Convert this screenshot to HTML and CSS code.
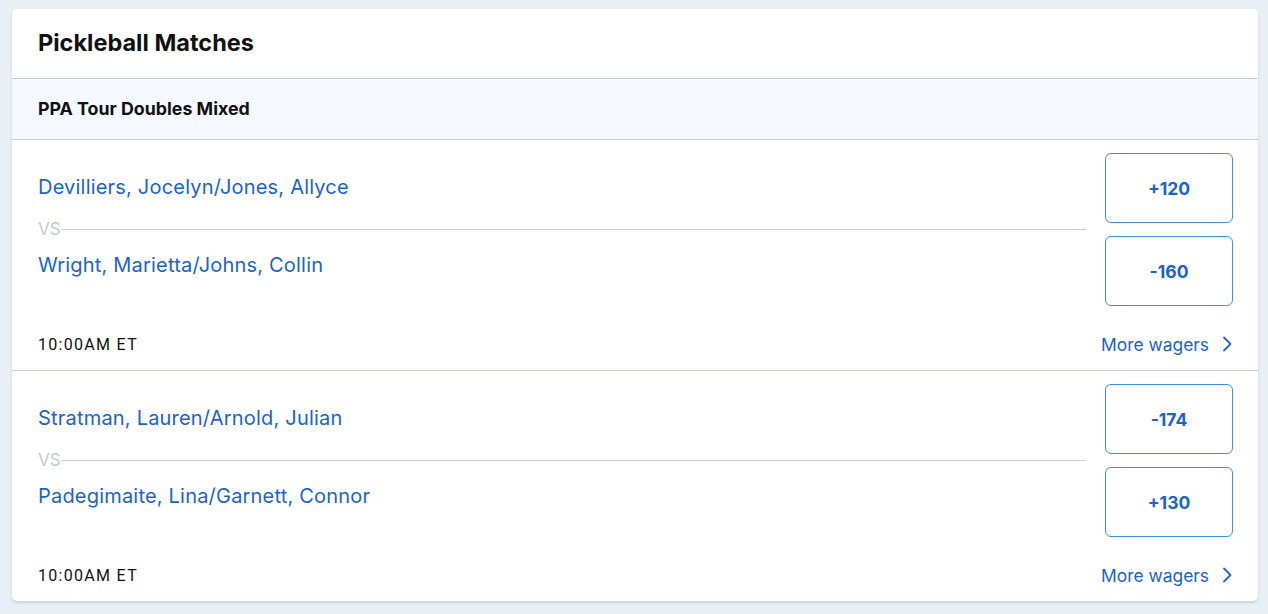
FILE: index.html
```html
<!DOCTYPE html>
<html>
<head>
<meta charset="utf-8">
<link rel="stylesheet" href="styles.css">
</head>
<body>
<div class="card">
  <div class="card-header"><h1 class="title">Pickleball Matches</h1></div>
  <div class="league">PPA Tour Doubles Mixed</div>
  <div class="match">
    <div class="match-main">
      <div class="teams">
        <div class="team">Devilliers, Jocelyn/Jones, Allyce</div>
        <div class="vs"><span class="vs-label">VS</span><span class="vs-line"></span></div>
        <div class="team">Wright, Marietta/Johns, Collin</div>
      </div>
      <div class="odds">
        <button class="odd">+120</button>
        <button class="odd">-160</button>
      </div>
    </div>
    <div class="match-foot">
      <span class="time">10:00AM ET</span>
      <a class="more">More wagers <svg class="chev" width="10" height="16" viewBox="0 0 10 16"><path d="M2 1.5 L8.5 8 L2 14.5" fill="none" stroke="#1a63cf" stroke-width="1.8" stroke-linecap="round" stroke-linejoin="round"/></svg></a>
    </div>
  </div>
  <div class="match">
    <div class="match-main">
      <div class="teams">
        <div class="team">Stratman, Lauren/Arnold, Julian</div>
        <div class="vs"><span class="vs-label">VS</span><span class="vs-line"></span></div>
        <div class="team">Padegimaite, Lina/Garnett, Connor</div>
      </div>
      <div class="odds">
        <button class="odd">-174</button>
        <button class="odd">+130</button>
      </div>
    </div>
    <div class="match-foot">
      <span class="time">10:00AM ET</span>
      <a class="more">More wagers <svg class="chev" width="10" height="16" viewBox="0 0 10 16"><path d="M2 1.5 L8.5 8 L2 14.5" fill="none" stroke="#1a63cf" stroke-width="1.8" stroke-linecap="round" stroke-linejoin="round"/></svg></a>
    </div>
  </div>
</div>
</body>
</html>
```
FILE: styles.css
```css
html, body { margin: 0; padding: 0; }
body {
  background: #eaeff6;
  font-family: "Inter", "Liberation Sans", sans-serif;
  padding: 9px 10px 0 12px;
  height: 614px;
  box-sizing: border-box;
  overflow: hidden;
}
.card {
  background: #fff;
  border-radius: 5px;
  box-shadow: 0 2px 3px rgba(0,0,0,0.12);
  overflow: hidden;
}
.card-header {
  height: 70px;
  box-sizing: border-box;
  padding: 0 26px;
  display: flex;
  align-items: center;
  border-bottom: 1px solid #c9d0da;
}
.title {
  margin: 0;
  font-size: 23.5px;
  font-weight: 700;
  color: #111;
  padding-bottom: 3px;
}
.league {
  height: 61px;
  box-sizing: border-box;
  padding: 0 26px 2px;
  display: flex;
  align-items: center;
  background: #f5f8fd;
  border-bottom: 1px solid #c9d0da;
  font-size: 17.8px;
  font-weight: 700;
  color: #111;
}
.match {
  padding: 13px 25px 0 26px;
  border-bottom: 1px solid #c9d0da;
}
.match:last-child { border-bottom: none; }
.match-main {
  display: flex;
  gap: 19px;
}
.teams {
  flex: 1;
  display: flex;
  flex-direction: column;
  padding-top: 20px;
}
.team {
  font-size: 20px;
  letter-spacing: 0.2px;
  color: #1a63cf;
  line-height: 28px;
  height: 28px;
}
.vs {
  display: flex;
  align-items: center;
  height: 22px;
  margin: 17px 0 11px;
}
.vs-label {
  font-size: 17px;
  color: #c3cad3;
}
.vs-line {
  flex: 1;
  height: 1px;
  background: #c9d0da;
}
.odds {
  display: flex;
  flex-direction: column;
  gap: 13px;
  width: 128px;
}
.odd {
  height: 70px;
  width: 128px;
  box-sizing: border-box;
  border: 1px solid #3d8ef0;
  border-radius: 6px;
  background: #fff;
  color: #1a63cf;
  font-family: "Inter", "Liberation Sans", sans-serif;
  font-size: 17.5px;
  font-weight: 700;
  padding: 0;
}
.match-foot {
  display: flex;
  justify-content: space-between;
  align-items: center;
  height: 64px;
  padding-top: 12px;
  box-sizing: border-box;
}
.time {
  font-family: "Roboto", "Liberation Sans", sans-serif;
  font-size: 16px;
  color: #111;
  letter-spacing: 1.3px;
}
.more {
  display: flex;
  align-items: center;
  gap: 13px;
  color: #1a63cf;
  font-size: 17.4px;
  margin-right: 1px;
}
.chev { display: block; }
```
